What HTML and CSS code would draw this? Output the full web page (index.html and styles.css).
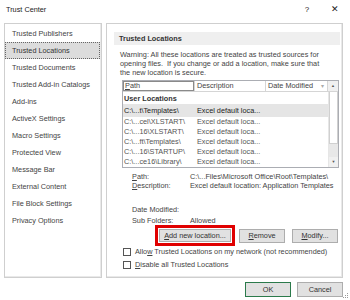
FILE: index.html
```html
<!DOCTYPE html>
<html lang="en">
<head>
    <meta charset="UTF-8">
    <title>Trust Center</title>
    <link rel="stylesheet" href="styles.css">
</head>
<body>
    <div class="dialog">
        <div class="titlebar">
            <span class="title">Trust Center</span>
            <span class="help">?</span>
            <span class="close">&#x2715;</span>
        </div>

        <div class="main">
            <ul class="nav">
                <li>Trusted Publishers</li>
                <li class="active">Trusted Locations</li>
                <li>Trusted Documents</li>
                <li>Trusted Add-in Catalogs</li>
                <li>Add-ins</li>
                <li>ActiveX Settings</li>
                <li>Macro Settings</li>
                <li>Protected View</li>
                <li>Message Bar</li>
                <li>External Content</li>
                <li>File Block Settings</li>
                <li>Privacy Options</li>
            </ul>

            <div class="content">
                <div class="section-head">Trusted Locations</div>
                <div class="section-body">
                    <p class="warning">Warning: All these locations are treated as trusted sources for<br>opening files.  If you change or add a location, make sure that<br>the new location is secure.</p>

                    <div class="table">
                        <div class="th path"><u>P</u>ath</div>
                        <div class="th">Description</div>
                        <div class="th date">Date Modified <span class="sort">&#9662;</span></div>
                        <div class="scroll-up">&#9650;</div>

                        <div class="group">User Locations</div>
                        <div class="scrollbar">
                            <div class="thumb"></div>
                            <div class="track"></div>
                            <div class="scroll-down">&#9660;</div>
                        </div>

                        <div class="td sel">C:\...t\Templates\</div>
                        <div class="td sel desc">Excel default loca...</div>
                        <div class="td sel"></div>

                        <div class="td">C:\...cel\XLSTART\</div>
                        <div class="td desc">Excel default loca...</div>
                        <div class="td"></div>

                        <div class="td">C:\...16\XLSTART\</div>
                        <div class="td desc">Excel default loca...</div>
                        <div class="td"></div>

                        <div class="td">C:\...ft\Templates\</div>
                        <div class="td desc">Excel default loca...</div>
                        <div class="td"></div>

                        <div class="td">C:\...16\STARTUP\</div>
                        <div class="td desc">Excel default loca...</div>
                        <div class="td"></div>

                        <div class="td">C:\...ce16\Library\</div>
                        <div class="td desc">Excel default loca...</div>
                        <div class="td"></div>
                    </div>

                    <div class="details">
                        <span class="label"><u>P</u>ath:</span>
                        <span>C:\...Files\Microsoft Office\Root\Templates\</span>
                        <span class="label"><u>D</u>escription:</span>
                        <span>Excel default location: Application Templates</span>
                    </div>

                    <div class="details meta">
                        <span class="label">Date Modified:</span>
                        <span></span>
                        <span class="label">Sub Folders:</span>
                        <span>Allowed</span>
                    </div>

                    <div class="actions">
                        <div class="highlight">
                            <button class="btn wide"><u>A</u>dd new location...</button>
                        </div>
                        <button class="btn"><u>R</u>emove</button>
                        <button class="btn modify"><u>M</u>odify...</button>
                    </div>

                    <label class="check first"><span class="box"></span><span>Allo<u>w</u> Trusted Locations on my network (not recommended)</span></label>
                    <label class="check"><span class="box"></span><span><u>D</u>isable all Trusted Locations</span></label>
                </div>
            </div>
        </div>

        <div class="footer">
            <button class="btn ok">OK</button>
            <button class="btn">Cancel</button>
        </div>

        <svg class="grip" width="6" height="6" viewBox="0 0 6 6">
            <rect x="4" y="0" width="1" height="1" fill="#999"/>
            <rect x="2" y="2" width="1" height="1" fill="#999"/>
            <rect x="4" y="2" width="1" height="1" fill="#999"/>
            <rect x="0" y="4" width="1" height="1" fill="#999"/>
            <rect x="2" y="4" width="1" height="1" fill="#999"/>
            <rect x="4" y="4" width="1" height="1" fill="#999"/>
        </svg>
    </div>
</body>
</html>
```

FILE: styles.css
```css
body {
    margin: 0;
    background: #fff;
    font-family: "Liberation Sans", Arial, sans-serif;
    font-size: 7.3px;
    color: #444;
}
.dialog {
    position: relative;
    width: 350px;
    height: 300px;
    overflow: hidden;
}
.titlebar {
    display: flex;
    align-items: center;
    height: 18px;
    margin-bottom: 5px;
    padding-left: 6px;
    color: #222;
}
.title {
    flex: 1;
}
.help {
    width: 10px;
    text-align: center;
    margin-right: 18px;
    font-size: 8px;
}
.close {
    width: 10px;
    text-align: center;
    margin-right: 10px;
    font-size: 9px;
}
.main {
    display: flex;
    gap: 4px;
    height: 255px;
    padding: 0 7px 0 4px;
}
.nav {
    list-style: none;
    margin: 0;
    padding: 1px 1px 0 0;
    width: 95px;
    border: 1px solid #cfcfcf;
    box-shadow: inset -1px -1px 0 #e9e9e9;
}
.nav li {
    height: 17px;
    line-height: 17px;
    padding-left: 7px;
}
.nav li.active {
    background: #dcdcdc;
    outline: 1px dotted #666;
    outline-offset: -1px;
    color: #333;
}
.content {
    flex: 1;
    border: 1px solid #cfcfcf;
    box-shadow: inset -1px -1px 0 #e9e9e9;
    padding: 8px 2px 0 7px;
}
.section-head {
    height: 13px;
    line-height: 13px;
    padding-left: 5px;
    background: #efefef;
    font-weight: bold;
    color: #333;
}
.section-body {
    padding-left: 6px;
}
.warning {
    margin: 5px 0 3px;
    line-height: 9px;
    white-space: pre-wrap;
}
.table {
    display: grid;
    grid-template-columns: 72px 71px 62px 10px;
    grid-template-rows: 11px 12px 13px repeat(5, 10px);
    width: 215px;
    margin-left: 2px;
    border: 1px solid #abadb3;
    line-height: 10px;
}
.th {
    border-right: 1px solid #d5d5d5;
    border-bottom: 1px solid #d5d5d5;
    padding-left: 2px;
    line-height: 10px;
}
.th.path {
    box-shadow: inset 0 0 0 1px #8a8a8a;
}
.th.date {
    display: flex;
    justify-content: space-between;
    padding-right: 3px;
}
.sort {
    color: #aaa;
    font-size: 6px;
}
.scroll-up, .scroll-down {
    display: flex;
    align-items: center;
    justify-content: center;
    font-size: 4px;
    color: #555;
    background: #f0f0f0;
}
.scroll-up {
    border-bottom: 1px solid #d5d5d5;
}
.group {
    grid-column: 1 / 4;
    font-weight: bold;
    color: #333;
    padding: 2px 0 0 1px;
}
.scrollbar {
    grid-column: 4;
    grid-row: 2 / 9;
    display: flex;
    flex-direction: column;
    border-left: 1px solid #e6e6e6;
}
.thumb {
    flex: 1;
    background: #fff;
    border: 1px solid #d0d0d0;
    border-top: none;
}
.track {
    height: 13px;
    background: #e8e8e8;
}
.scroll-down {
    height: 10px;
}
.td {
    padding-left: 1px;
    white-space: nowrap;
    overflow: hidden;
    color: #555;
}
.td.desc {
    padding-left: 2px;
}
.td.sel {
    background: #e5e5e5;
    color: #222;
    line-height: 13px;
}
.details {
    display: grid;
    grid-template-columns: 58px 1fr;
    margin: 4px 0 0 12px;
    line-height: 9px;
}
.details.meta {
    margin-top: 14px;
    line-height: 11px;
}
.label {
    color: #444;
}
.actions {
    display: flex;
    align-items: center;
    margin: -1px 0 0 35px;
}
.highlight {
    border: 3px solid #e00000;
    padding: 1px;
    margin-right: 4px;
}
.btn {
    font: inherit;
    color: #333;
    height: 14px;
    width: 46px;
    padding: 0;
    background: #e1e1e1;
    border: 1px solid #adadad;
}
.btn.wide {
    width: 72px;
    height: 13px;
    display: block;
}
.btn.modify {
    margin-left: 7px;
}
.check {
    display: flex;
    align-items: center;
    gap: 4px;
    height: 13px;
    margin-left: 3px;
}
.check.first {
    margin-top: -1px;
}
.box {
    width: 6px;
    height: 6px;
    border: 1px solid #555;
    background: #fff;
}
.footer {
    display: flex;
    justify-content: flex-end;
    gap: 6px;
    margin-top: 4px;
    padding-right: 7px;
}
.footer .btn {
    height: 15px;
}
.btn.ok {
    border-color: #2b7a4b;
}
.grip {
    position: absolute;
    right: 1px;
    bottom: 1px;
}
```
